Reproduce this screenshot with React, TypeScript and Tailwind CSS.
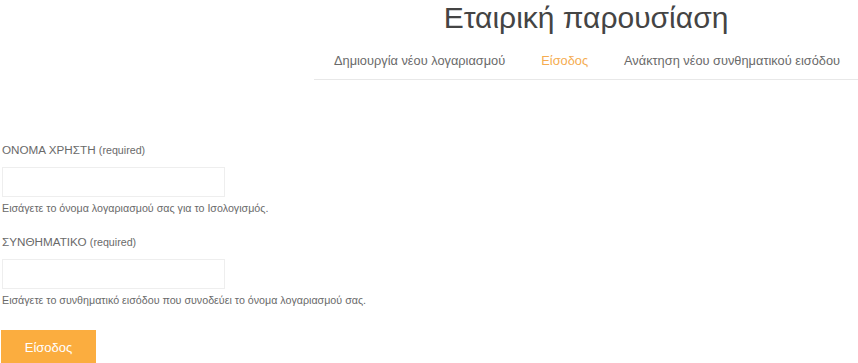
export default function App() {
  const font = { fontFamily: '"Liberation Sans", Arial, sans-serif' };
  return (
    <div className="w-[858px] h-[363px] bg-white overflow-hidden" style={font}>
      <div className="flex justify-end">
        <div className="w-[544px] flex flex-col">
          <h1 className="text-center text-[30px] leading-[36px] text-[#444] font-normal">Εταιρική παρουσίαση</h1>
          <nav className="flex justify-end mt-[16px] border-b border-[#e8e8e8] pb-[9px] whitespace-nowrap">
            <span className="px-[18px] text-[12.8px] leading-[18px] text-[#6a6a6a]">Δημιουργία νέου λογαριασμού</span>
            <span className="px-[18px] text-[12.8px] leading-[18px] text-[#f5ac50]">Είσοδος</span>
            <span className="px-[18px] text-[12.8px] leading-[18px] text-[#6a6a6a]">Ανάκτηση νέου συνθηματικού εισόδου</span>
          </nav>
        </div>
      </div>
      <form className="mt-[63px] pl-[2px] flex flex-col">
        <label className="text-[11.7px] leading-[14px] text-[#6a6a6a]">ΟΝΟΜΑ ΧΡΗΣΤΗ <span className="text-[10.7px]">(required)</span></label>
        <input className="mt-[10px] w-[223px] h-[30px] border border-[#eee] outline-none" />
        <p className="mt-[4px] text-[10.7px] leading-[14px] text-[#6a6a6a]">Εισάγετε το όνομα λογαριασμού σας για το Ισολογισμός.</p>
        <label className="mt-[20px] text-[11.7px] leading-[14px] text-[#6a6a6a]">ΣΥΝΘΗΜΑΤΙΚΟ <span className="text-[10.7px]">(required)</span></label>
        <input type="password" className="mt-[10px] w-[223px] h-[30px] border border-[#eee] outline-none" />
        <p className="mt-[4px] text-[10.7px] leading-[14px] text-[#6a6a6a]">Εισάγετε το συνθηματικό εισόδου που συνοδεύει το όνομα λογαριασμού σας.</p>
        <div className="mt-[23px] -ml-[1px]">
          <button type="button" className="w-[95px] h-[36px] bg-[#fbad3f] text-white text-[13px]">Είσοδος</button>
        </div>
      </form>
    </div>
  );
}
